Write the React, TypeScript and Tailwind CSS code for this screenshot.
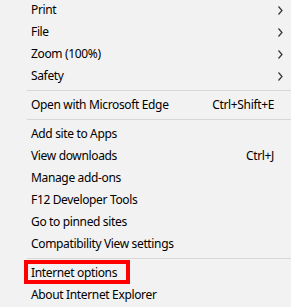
import React from "react";

type Item = { label: string; shortcut?: string; sub?: boolean };

const Chevron = () => (
  <svg width="5" height="9" viewBox="0 0 5 9" className="block">
    <path d="M0.5 0.5 L4 4.5 L0.5 8.5" fill="none" stroke="#333" strokeWidth="1.2" />
  </svg>
);

const Row = ({ item }: { item: Item }) => (
  <div className="flex items-center h-[22px] pl-[31px] pr-[17px] text-[12px] tracking-[-0.35px] text-black relative">
    <span className="flex-1 whitespace-nowrap">{item.label}</span>
    {item.shortcut && <span className="whitespace-nowrap">{item.shortcut}</span>}
    {item.sub && (
      <span className="absolute right-[8px] top-[7px]">
        <Chevron />
      </span>
    )}
  </div>
);

const Sep = () => (
  <div className="h-[7px] flex items-center pl-[27px]">
    <div className="h-px w-full bg-[#d7d7d7]" />
  </div>
);

export default function App() {
  const g1: Item[] = [
    { label: "Print", sub: true },
    { label: "File", sub: true },
    { label: "Zoom (100%)", sub: true },
    { label: "Safety", sub: true },
  ];
  const g2: Item[] = [{ label: "Open with Microsoft Edge", shortcut: "Ctrl+Shift+E" }];
  const g3: Item[] = [
    { label: "Add site to Apps" },
    { label: "View downloads", shortcut: "Ctrl+J" },
    { label: "Manage add-ons" },
    { label: "F12 Developer Tools" },
    { label: "Go to pinned sites" },
    { label: "Compatibility View settings" },
  ];
  const g4: Item[] = [{ label: "Internet options" }, { label: "About Internet Explorer" }];
  return (
    <div
      className="w-[291px] h-[307px] bg-[#f2f2f2] overflow-hidden relative"
      style={{ fontFamily: '"Noto Sans", "Open Sans", sans-serif' }}
    >
      <div className="-mt-[1px]">
        {g1.map((i) => (
          <Row key={i.label} item={i} />
        ))}
        <Sep />
        {g2.map((i) => (
          <Row key={i.label} item={i} />
        ))}
        <Sep />
        {g3.map((i) => (
          <Row key={i.label} item={i} />
        ))}
        <Sep />
        {g4.map((i) => (
          <Row key={i.label} item={i} />
        ))}
      </div>
      <div className="absolute left-[24px] top-[260px] w-[106px] h-[24px] border-[4px] border-[#ff0000]" />
    </div>
  );
}
